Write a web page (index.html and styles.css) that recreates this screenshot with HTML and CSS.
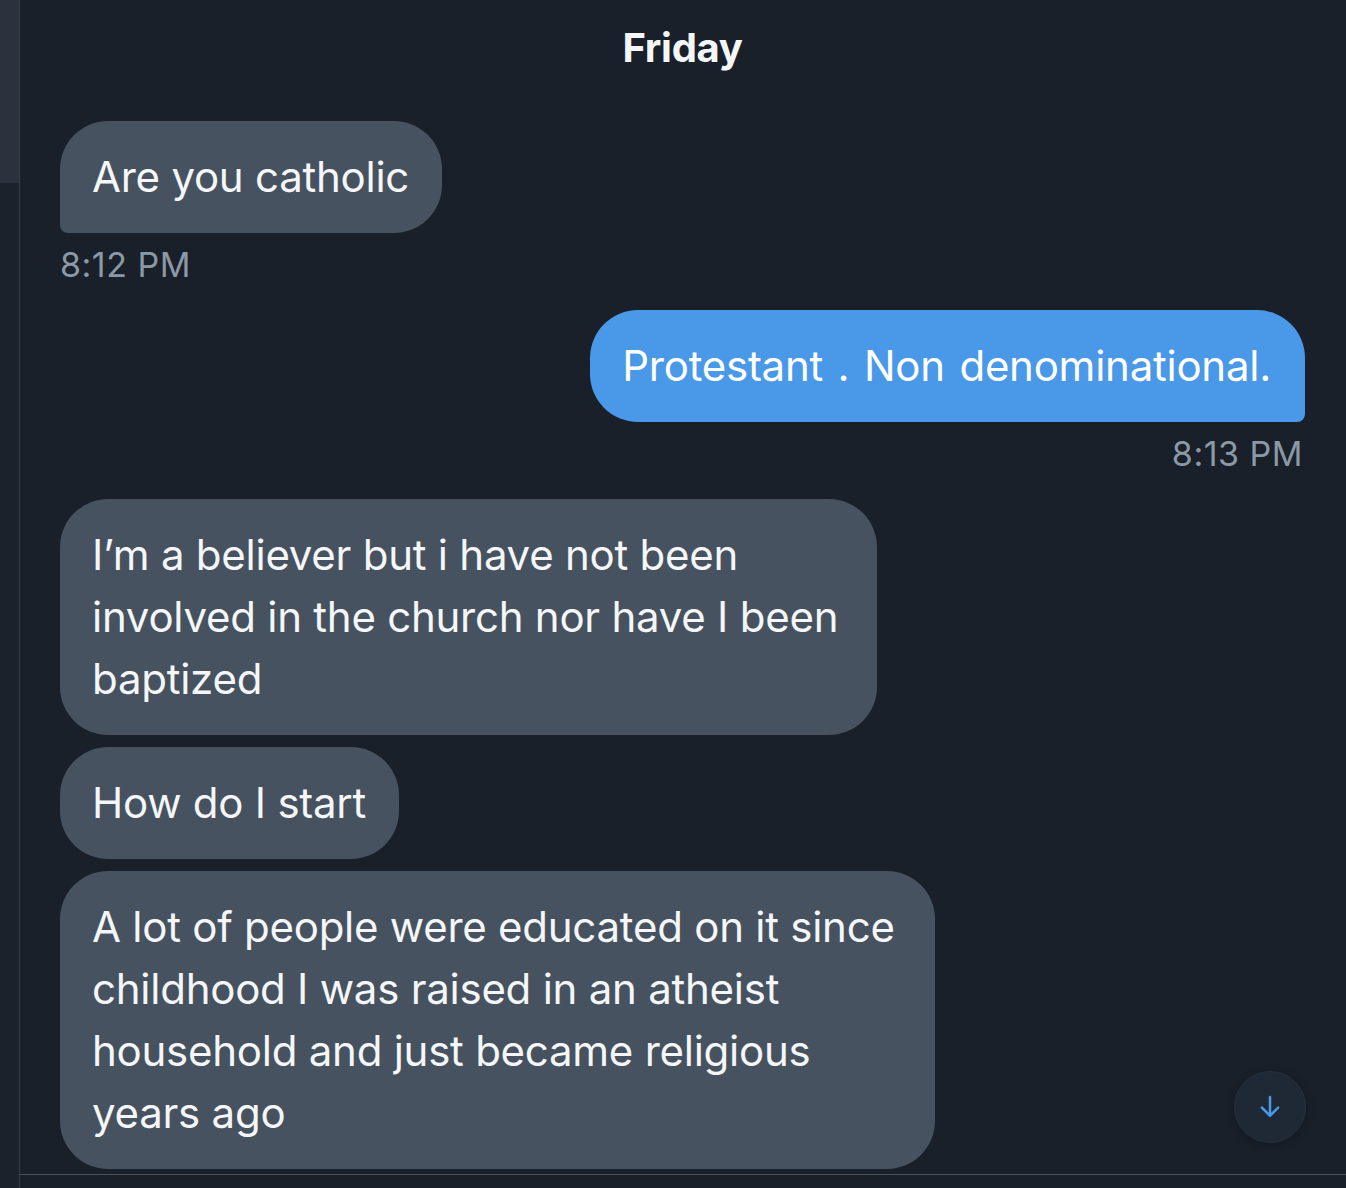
FILE: index.html
```html
<!DOCTYPE html>
<html lang="en">
<head>
<meta charset="utf-8">
<title>Messages</title>
<link rel="stylesheet" href="styles.css">
</head>
<body>
<div class="app">
  <div class="scrollbar"><div class="thumb"></div></div>
  <main class="pane">
    <div class="conversation">
      <div class="day">Friday</div>

      <div class="msg in">
        <div class="bubble tail-left">Are you catholic</div>
        <div class="time">8:12 PM</div>
      </div>

      <div class="msg out">
        <div class="bubble blue tail-right">Protestant . Non denominational.</div>
        <div class="time">8:13 PM</div>
      </div>

      <div class="msg in group">
        <div class="bubble wide1">I’m a believer but i have not been involved in the church nor have I been baptized</div>
        <div class="bubble">How do I start</div>
        <div class="bubble wide2">A lot of people were educated on it since childhood I was raised in an atheist household and just became religious years ago</div>
      </div>

      <button class="scroll-down" aria-label="Scroll to bottom">
        <svg viewBox="0 0 24 24" width="30" height="30" aria-hidden="true">
          <path d="M12 4v15M5.5 12.5 12 19l6.5-6.5" fill="none" stroke="currentColor" stroke-width="2" stroke-linecap="round" stroke-linejoin="round"/>
        </svg>
      </button>
    </div>
  </main>
</div>
</body>
</html>
```
FILE: styles.css
```css
* { box-sizing: border-box; }
html, body {
  margin: 0;
  padding: 0;
  background: #19202a;
}
body {
  width: 1346px;
  height: 1188px;
  overflow: hidden;
  font-family: Inter, "Noto Sans", "Liberation Sans", sans-serif;
  color: #f2f4f6;
}
.app {
  display: flex;
  height: 100%;
}
.scrollbar {
  width: 19px;
  flex: none;
  background: #1b222b;
}
.thumb {
  height: 183px;
  background: #2a323d;
}
.pane {
  flex: 1;
  border-left: 1px solid #373e48;
  display: flex;
  flex-direction: column;
}
.conversation {
  position: relative;
  height: 1175px;
  border-bottom: 1px solid #4a515b;
  padding: 23px 41px 0 40px;
  display: flex;
  flex-direction: column;
  overflow: hidden;
}
.day {
  text-align: center;
  font-weight: 700;
  font-size: 40px;
  line-height: 50px;
  letter-spacing: -0.3px;
  color: #f4f6f8;
  margin-bottom: 48px;
}
.msg {
  display: flex;
  flex-direction: column;
}
.msg.in { align-items: flex-start; }
.msg.out { align-items: flex-end; }
.bubble {
  background: #46525f;
  color: #f4f6f8;
  font-size: 42px;
  line-height: 62px;
  letter-spacing: -0.25px;
  padding: 25px 33px 25px 32px;
  border-radius: 48px;
}
.bubble.blue {
  background: #4a98e8;
  color: #ffffff;
  padding-right: 34px;
  word-spacing: 3px;
}
.tail-left { border-bottom-left-radius: 8px; }
.tail-right { border-bottom-right-radius: 8px; }
.time {
  font-size: 34px;
  line-height: 40px;
  color: #8b98a5;
  letter-spacing: 0.5px;
  margin-top: 12px;
  margin-bottom: 25px;
  padding-right: 2px;
}
.group { gap: 12px; }
.wide1 { width: 817px; }
.wide2 { width: 875px; }
.scroll-down {
  position: absolute;
  right: 40px;
  bottom: 31px;
  width: 72px;
  height: 72px;
  border-radius: 50%;
  border: 1px solid #28313c;
  background: #1f2835;
  color: #4a98e8;
  display: flex;
  align-items: center;
  justify-content: center;
  padding: 0;
  box-shadow: 0 2px 8px rgba(0,0,0,0.25);
}
.scroll-down svg { display: block; }
```
